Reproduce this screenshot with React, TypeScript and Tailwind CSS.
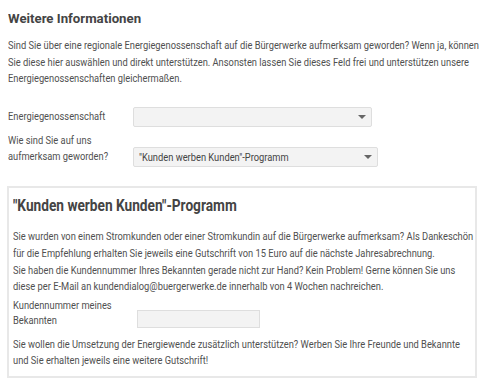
import { useState } from "react";

// Roboto, horizontally squeezed, stands in for the condensed face of the original
function Line({ children }: { children: React.ReactNode }) {
  return <span className="block whitespace-nowrap origin-left scale-x-[0.81]">{children}</span>;
}

function Arrow() {
  return (
    <svg width="8" height="4" viewBox="0 0 8 4" className="shrink-0">
      <path d="M0 0 H8 L4 4 Z" fill="#666" />
    </svg>
  );
}

function SelectBox({ value, width }: { value: string; width: string }) {
  return (
    <div className={`${width} h-[20px] shrink-0 flex flex-row items-center justify-between pl-[5px] pr-[5px] bg-[#f3f3f3] border border-[#dedede] rounded-[2px] text-[11.5px] text-[#444]`}>
      <span className="whitespace-nowrap origin-left scale-x-[0.81]">{value}</span>
      <Arrow />
    </div>
  );
}

export default function App() {
  const [kundennummer, setKundennummer] = useState("");

  return (
    <div className="w-[486px] h-[390px] overflow-hidden bg-white pl-2 pt-2 text-[#505050] font-['Roboto',sans-serif]">
      <h1 className="text-[13.5px] font-bold text-[#444] leading-[20px] whitespace-nowrap origin-left scale-x-[0.98]">
        Weitere Informationen
      </h1>

      <div className="mt-[9px] text-[11.5px] leading-[16.5px]">
        <Line>Sind Sie über eine regionale Energiegenossenschaft auf die Bürgerwerke aufmerksam geworden? Wenn ja, können</Line>
        <Line>Sie diese hier auswählen und direkt unterstützen. Ansonsten lassen Sie dieses Feld frei und unterstützen unsere</Line>
        <Line>Energiegenossenschaften gleichermaßen.</Line>
      </div>

      <div className="mt-[20px] flex flex-row items-center text-[11.5px] leading-[16.5px]">
        <div className="w-[125px] shrink-0">
          <Line>Energiegenossenschaft</Line>
        </div>
        <SelectBox value="" width="w-[239px]" />
      </div>

      <div className="mt-[5px] flex flex-row items-start text-[11.5px] leading-[16.5px]">
        <div className="w-[125px] shrink-0">
          <Line>Wie sind Sie auf uns</Line>
          <Line>aufmerksam geworden?</Line>
        </div>
        <div className="mt-[15.5px]">
          <SelectBox value={'"Kunden werben Kunden"-Programm'} width="w-[245px]" />
        </div>
      </div>

      <div className="mt-[18.5px] -ml-px w-[470px] h-[192px] border-2 border-[#e8e8e8] pl-1 pt-[7.5px]">
        <h2 className="text-[16px] font-bold text-[#444] leading-[22px] whitespace-nowrap origin-left scale-x-[0.855]">
          "Kunden werben Kunden"-Programm
        </h2>

        <div className="mt-[11px] text-[11.5px] leading-[16.8px]">
          <Line>Sie wurden von einem Stromkunden oder einer Stromkundin auf die Bürgerwerke aufmerksam? Als Dankeschön</Line>
          <Line>für die Empfehlung erhalten Sie jeweils eine Gutschrift von 15 Euro auf die nächste Jahresabrechnung.</Line>
          <Line>Sie haben die Kundennummer Ihres Bekannten gerade nicht zur Hand? Kein Problem! Gerne können Sie uns</Line>
          <Line>diese per E-Mail an kundendialog@buergerwerke.de innerhalb von 4 Wochen nachreichen.</Line>
        </div>

        <div className="mt-[3px] flex flex-row items-end text-[11.5px] leading-[15px]">
          <div className="w-[124px] shrink-0">
            <Line>Kundennummer meines</Line>
            <Line>Bekannten</Line>
          </div>
          <input
            value={kundennummer}
            onChange={(e) => setKundennummer(e.target.value)}
            className="w-[123px] h-[18px] bg-[#f3f3f3] border border-[#dedede] outline-none text-[11px] px-1"
          />
        </div>

        <div className="mt-[8px] text-[11.5px] leading-[16px]">
          <Line>Sie wollen die Umsetzung der Energiewende zusätzlich unterstützen? Werben Sie Ihre Freunde und Bekannte</Line>
          <Line>und Sie erhalten jeweils eine weitere Gutschrift!</Line>
        </div>
      </div>
    </div>
  );
}
